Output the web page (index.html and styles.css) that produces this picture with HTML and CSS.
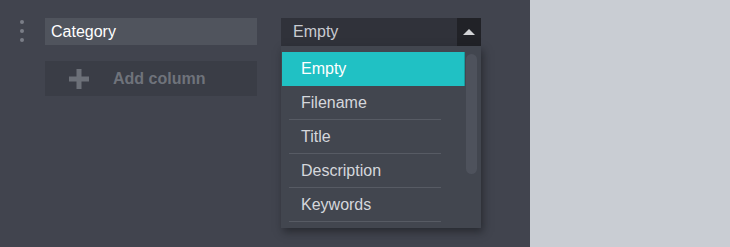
FILE: index.html
```html
<!DOCTYPE html>
<html lang="en">
<head>
    <meta charset="UTF-8">
    <title>Columns</title>
    <link rel="stylesheet" href="styles.css">
</head>
<body>
    <div class="editor">
        <div class="row">
            <div class="grip">
                <span></span><span></span><span></span>
            </div>
            <div class="fields">
                <div class="name-input">Category</div>
                <div class="add-column">
                    <svg class="plus" width="20" height="20" viewBox="0 0 20 20">
                        <rect x="7.5" y="0" width="5" height="20" fill="#6c7078"/>
                        <rect x="0" y="7.5" width="20" height="5" fill="#6c7078"/>
                    </svg>
                    <span>Add column</span>
                </div>
            </div>
            <div class="select">
                <div class="select-head">
                    <span class="select-value">Empty</span>
                    <span class="select-arrow"><i></i></span>
                </div>
                <div class="dropdown">
                    <ul class="options">
                        <li class="active">Empty</li>
                        <li>Filename</li>
                        <li>Title</li>
                        <li>Description</li>
                        <li>Keywords</li>
                    </ul>
                    <div class="scrollbar"></div>
                </div>
            </div>
        </div>
    </div>
    <div class="aside"></div>
</body>
</html>
```

FILE: styles.css
```css
body {
    margin: 0;
    display: flex;
    height: 247px;
    overflow: hidden;
    font-family: "Liberation Sans", Arial, sans-serif;
    font-size: 16px;
}
.editor {
    width: 530px;
    background: #41444e;
    padding-top: 18px;
    box-sizing: border-box;
}
.aside {
    flex: 1;
    background: #c9cdd3;
}
.row {
    display: flex;
    align-items: flex-start;
}
.grip {
    display: flex;
    flex-direction: column;
    gap: 5px;
    margin: 2px 0 0 20px;
}
.grip span {
    width: 4px;
    height: 4px;
    border-radius: 50%;
    background: #7a7e87;
}
.fields {
    margin-left: 21px;
    width: 212px;
}
.name-input {
    height: 27px;
    line-height: 27px;
    padding-left: 6px;
    background: #50545d;
    color: #ffffff;
}
.add-column {
    margin-top: 16px;
    height: 35px;
    display: flex;
    align-items: center;
    gap: 24px;
    padding-left: 24px;
    background: #3a3d46;
    color: #6f737b;
    font-weight: bold;
}
.plus {
    display: block;
}
.select {
    position: relative;
    margin-left: 24px;
    width: 200px;
}
.select-head {
    display: flex;
    height: 28px;
    background: #30323a;
}
.select-value {
    flex: 1;
    line-height: 27px;
    padding-left: 12px;
    color: #c9cbd1;
}
.select-arrow {
    width: 24px;
    background: #212227;
    display: flex;
    align-items: center;
    justify-content: center;
}
.select-arrow i {
    width: 0;
    height: 0;
    border-left: 6px solid transparent;
    border-right: 6px solid transparent;
    border-bottom: 6px solid #d2d3d6;
}
.dropdown {
    position: absolute;
    top: 28px;
    left: 0;
    width: 200px;
    box-sizing: border-box;
    padding: 6px 4px 6px 1px;
    display: flex;
    background: #42464f;
    box-shadow: 2px 4px 8px rgba(20, 21, 26, 0.55);
}
.options {
    list-style: none;
    margin: 0;
    padding: 0;
    width: 183px;
}
.options li {
    position: relative;
    height: 34px;
    line-height: 33px;
    padding-left: 19px;
    color: #d5d7dc;
}
.options li::after {
    content: "";
    position: absolute;
    left: 7px;
    bottom: 0;
    width: 152px;
    height: 1px;
    background: #575b64;
}
.options li.active {
    background: #20c1c4;
    color: #ffffff;
    border-right: 1px solid #1a9a9c;
    box-sizing: border-box;
}
.options li.active::after {
    display: none;
}
.scrollbar {
    margin: 2px 0 0 1px;
    width: 11px;
    height: 120px;
    border-radius: 6px;
    background: #4e525c;
}
```
